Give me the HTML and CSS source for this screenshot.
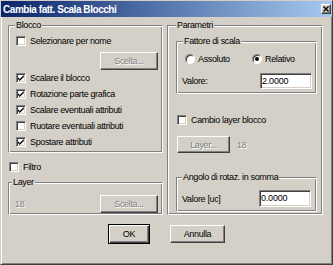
FILE: index.html
```html
<!DOCTYPE html>
<html>
<head>
<meta charset="utf-8">
<link rel="stylesheet" href="styles.css">
</head>
<body>
<div class="window">
  <div class="titlebar">
    <span class="title">Cambia fatt. Scala Blocchi</span>
    <span class="close"><svg width="6" height="6" viewBox="0 0 6 6"><path d="M0.5 0.5L5.5 5.5M5.5 0.5L0.5 5.5" stroke="#000" stroke-width="1.4"/></svg></span>
  </div>
  <div class="main">
    <div class="columns">
      <div class="col">
        <div class="group blocco">
          <span class="legend">Blocco</span>
          <div class="check"><span class="box"></span>Selezionare per nome</div>
          <div class="btnrow"><span class="btn scelta disabled">Scelta...</span></div>
          <div class="check"><span class="box"><svg class="tick" width="8" height="8" viewBox="0 0 8 8"><path d="M1 3.2L2.8 5L6.8 1V2.9L2.8 6.9L1 5.1Z" fill="#000"/></svg></span>Scalare il blocco</div>
          <div class="check"><span class="box"><svg class="tick" width="8" height="8" viewBox="0 0 8 8"><path d="M1 3.2L2.8 5L6.8 1V2.9L2.8 6.9L1 5.1Z" fill="#000"/></svg></span>Rotazione parte grafica</div>
          <div class="check"><span class="box"><svg class="tick" width="8" height="8" viewBox="0 0 8 8"><path d="M1 3.2L2.8 5L6.8 1V2.9L2.8 6.9L1 5.1Z" fill="#000"/></svg></span>Scalare eventuali attributi</div>
          <div class="check"><span class="box"></span>Ruotare eventuali attributi</div>
          <div class="check"><span class="box"><svg class="tick" width="8" height="8" viewBox="0 0 8 8"><path d="M1 3.2L2.8 5L6.8 1V2.9L2.8 6.9L1 5.1Z" fill="#000"/></svg></span>Spostare attributi</div>
        </div>
        <div class="check filtro"><span class="box"></span>Filtro</div>
        <div class="group layer">
          <span class="legend">Layer</span>
          <div class="layerrow"><span class="disabled">18</span><span class="btn scelta disabled">Scelta...</span></div>
        </div>
      </div>
      <div class="col">
        <div class="group parametri">
          <span class="legend">Parametri</span>
          <div class="group fattore">
            <span class="legend">Fattore di scala</span>
            <div class="radios">
              <div class="radio"><span class="circle"></span>Assoluto</div>
              <div class="radio"><span class="circle on"></span>Relativo</div>
            </div>
            <div class="valrow"><span>Valore:</span><span class="input">2.0000</span></div>
          </div>
          <div class="check cambio"><span class="box"></span>Cambio layer blocco</div>
          <div class="layerbtnrow"><span class="btn layerbtn disabled">Layer...</span><span class="disabled">18</span></div>
          <div class="group angolo">
            <span class="legend">Angolo di rotaz. in somma</span>
            <div class="valrow"><span>Valore [uc]</span><span class="input tall">0.0000</span></div>
          </div>
        </div>
      </div>
    </div>
    <div class="footer">
      <span class="btn default">OK</span>
      <span class="btn annulla">Annulla</span>
    </div>
  </div>
</div>
</body>
</html>
```

FILE: styles.css
```css
* { box-sizing: border-box; }
body {
  margin: 0;
  background: #d4d0c8;
  font-family: "Liberation Sans", Arial, sans-serif;
  font-size: 9px;
  letter-spacing: -0.35px;
  color: #000;
}
.window {
  width: 333px;
  height: 265px;
  background: #d4d0c8;
  border: 1px solid;
  border-color: #d4d0c8 #404040 #404040 #d4d0c8;
  box-shadow: inset 1px 1px 0 #fff, inset -1px -1px 0 #808080;
}
.titlebar {
  height: 16px;
  display: flex;
  align-items: center;
  justify-content: space-between;
  padding: 0 1px 0 2px;
  background: linear-gradient(to right, #0a246a, #a6caf0);
}
.title {
  color: #fff;
  font-weight: bold;
  font-size: 10px;
  letter-spacing: -0.45px;
  white-space: nowrap;
}
.close {
  width: 10px;
  height: 10px;
  background: #d4d0c8;
  border: 1px solid;
  border-color: #fff #404040 #404040 #fff;
  box-shadow: inset -1px -1px 0 #808080;
  display: flex;
  align-items: center;
  justify-content: center;
}
.close svg { display: block; }
.main { padding-top: 8px; }
.columns {
  display: grid;
  grid-template-columns: 155px 156px;
  column-gap: 4px;
  margin-left: 7px;
}
.col { display: flex; flex-direction: column; }
.group {
  position: relative;
  border: 1px solid;
  border-color: #808080 #fff #fff #808080;
  box-shadow: inset 1px 1px 0 #fff, inset -1px -1px 0 #808080;
}
.legend {
  position: absolute;
  top: -7px;
  left: 6px;
  padding: 0 1px;
  line-height: 12px;
  background: #d4d0c8;
  white-space: nowrap;
}
.layer > .legend { left: 3px; }
.parametri > .legend { left: 8px; }
.angolo > .legend { left: 5px; }
.check {
  display: flex;
  align-items: center;
  gap: 4px;
  height: 16px;
  white-space: nowrap;
}
.box {
  width: 10px;
  height: 10px;
  flex: none;
  background: #fff;
  border: 1px solid;
  border-color: #808080 #fff #fff #808080;
  box-shadow: inset 1px 1px 0 #404040, inset -1px -1px 0 #d4d0c8;
}
.tick { display: block; }
.btn {
  display: inline-flex;
  align-items: center;
  justify-content: center;
  height: 18px;
  background: #d4d0c8;
  border: 1px solid;
  border-color: #fff #404040 #404040 #fff;
  box-shadow: inset -1px -1px 0 #808080;
  white-space: nowrap;
}
.disabled {
  color: #808080;
  text-shadow: 1px 1px 0 #fff;
}
.blocco {
  height: 128px;
  padding: 7px 4px 0 7px;
}
.btnrow {
  display: flex;
  justify-content: flex-end;
  margin: 3px 0 0;
}
.scelta { width: 58px; }
.filtro {
  margin-top: 6px;
  padding-left: 1px;
}
.layer {
  margin-top: 7px;
  height: 33px;
  padding: 12px 4px 0 6px;
}
.layerrow {
  display: flex;
  align-items: center;
  justify-content: space-between;
}
.parametri {
  height: 190px;
  padding: 15px 5px 0 8px;
}
.fattore {
  height: 53px;
  padding: 9px 4px 0 5px;
}
.radios {
  display: grid;
  grid-template-columns: 67px auto;
  height: 16px;
  padding-left: 3px;
}
.radio {
  display: flex;
  align-items: center;
  gap: 3px;
  white-space: nowrap;
}
.circle {
  width: 10px;
  height: 10px;
  flex: none;
  border-radius: 50%;
  background: #fff;
  border: 1px solid;
  border-color: #808080 #fff #fff #808080;
  box-shadow: inset 1px 1px 0 #404040;
  display: flex;
  align-items: center;
  justify-content: center;
}
.circle.on::after {
  content: "";
  width: 4px;
  height: 4px;
  border-radius: 50%;
  background: #000;
}
.valrow {
  display: flex;
  align-items: center;
  justify-content: space-between;
  margin-top: 6px;
}
.angolo .valrow { margin-top: 0; }
.input {
  width: 52px;
  height: 16px;
  background: #fff;
  border: 1px solid;
  border-color: #808080 #fff #fff #808080;
  box-shadow: inset 1px 1px 0 #404040, inset -1px -1px 0 #d4d0c8;
  padding-left: 1px;
  line-height: 14px;
  letter-spacing: -0.2px;
}
.input.tall { height: 17px; line-height: 15px; }
.cambio {
  margin-top: 18px;
  margin-left: 1px;
}
.layerbtnrow {
  display: flex;
  align-items: center;
  gap: 7px;
  margin: 8px 0 0 1px;
}
.layerbtn { width: 53px; height: 17px; }
.angolo {
  margin-top: 24px;
  height: 35px;
  padding: 12px 5px 0 5px;
}
.footer {
  display: flex;
  justify-content: center;
  align-items: center;
  gap: 20px;
  margin-top: 9px;
}
.default {
  width: 42px;
  height: 20px;
  border: 1px solid #000;
  box-shadow: inset 1px 1px 0 #fff, inset -1px -1px 0 #404040, inset -2px -2px 0 #808080;
}
.annulla { width: 55px; }
```
